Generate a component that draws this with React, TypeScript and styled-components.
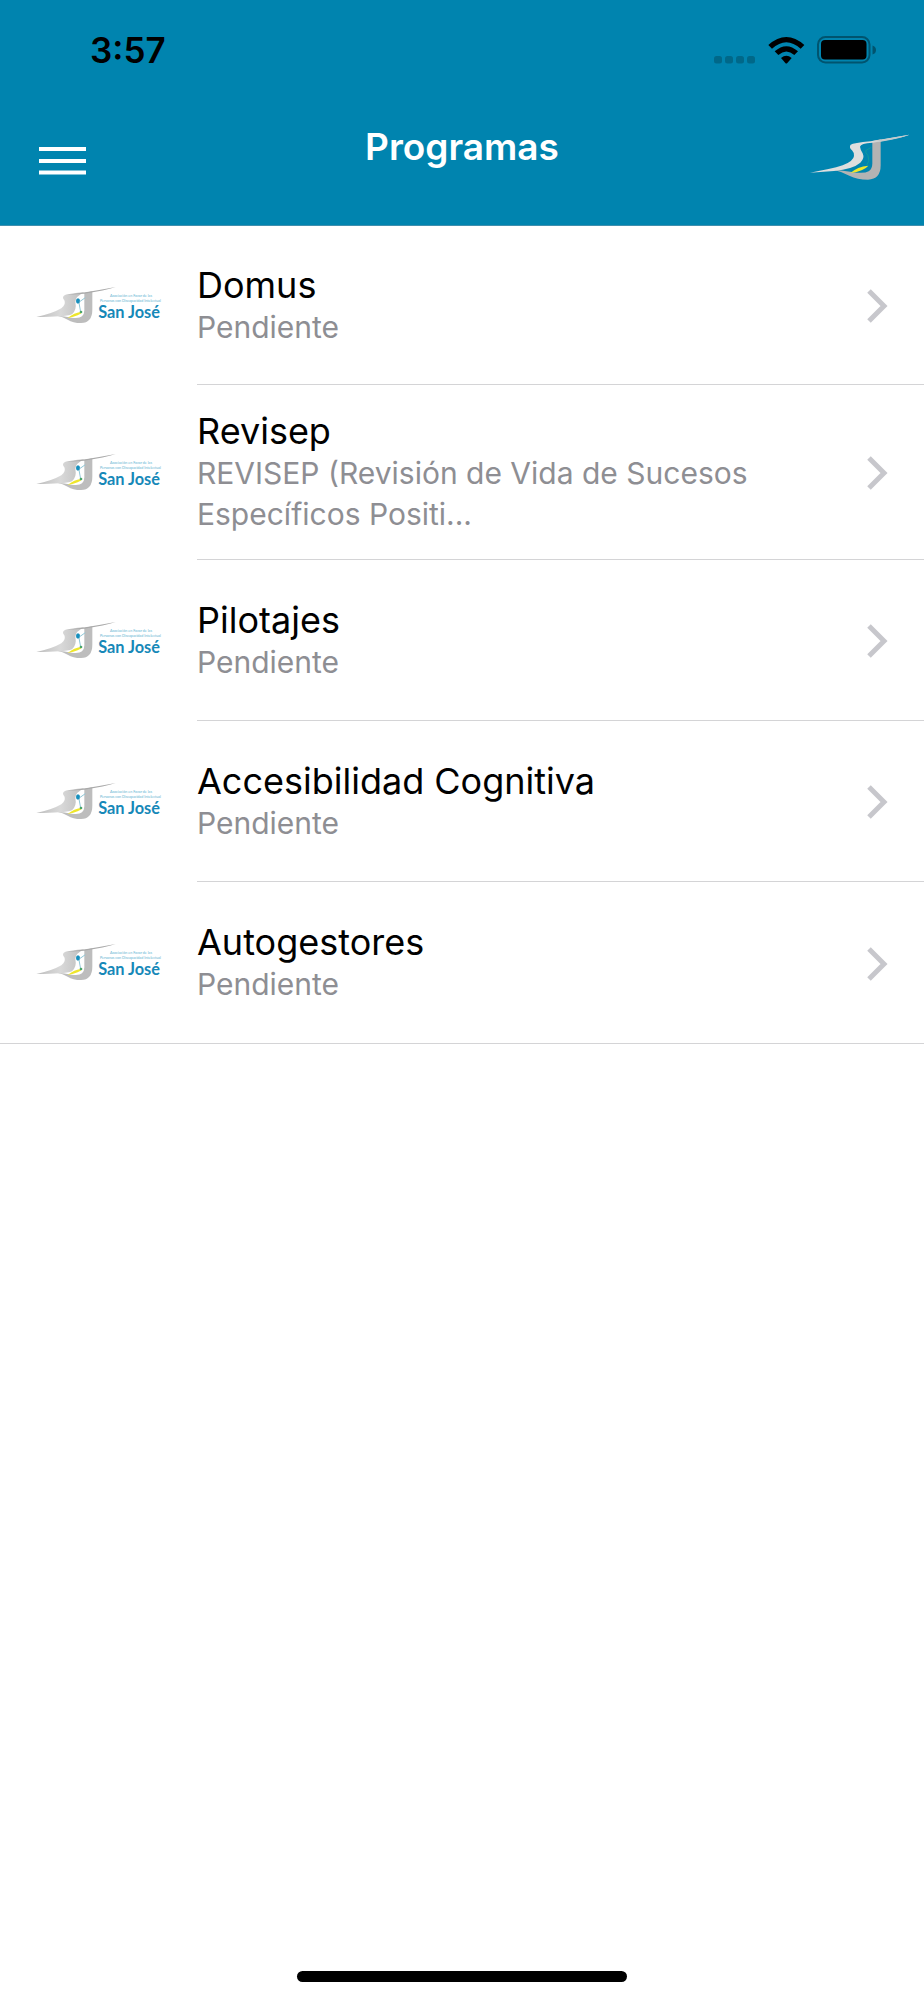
import React from "react";
import styled, { createGlobalStyle } from "styled-components";

const GlobalStyle = createGlobalStyle`
  * { box-sizing: border-box; }
  body {
    margin: 0;
    background: #fff;
    color: #000;
    font-family: Inter, "Liberation Sans", sans-serif;
  }
`;

const Screen = styled.div`
  display: flex;
  flex-direction: column;
  min-height: 100vh;
`;

const Header = styled.header`
  background: #0084af;
  border-bottom: 1px solid #3f8fae;
`;

const StatusBar = styled.div`
  display: flex;
  align-items: center;
  justify-content: space-between;
  height: 100px;
  padding: 0 48px 0 90px;
`;

const Clock = styled.time`
  font-size: 35px;
  font-weight: 600;
  line-height: 40px;
`;

const StatusIcons = styled.div`
  display: flex;
  align-items: center;
  gap: 12px;
`;

const NavBar = styled.div`
  display: grid;
  grid-template-columns: 1fr auto 1fr;
  align-items: start;
  height: 125px;
  padding-top: 10px;
`;

const MenuButton = styled.button`
  display: flex;
  align-items: center;
  justify-content: center;
  width: 124px;
  height: 102px;
  padding: 0;
  border: 0;
  background: none;
  cursor: pointer;
`;

const Title = styled.h1`
  margin: 15px 0 0;
  color: #fff;
  font-size: 37px;
  font-weight: 600;
  line-height: 44px;
`;

const BrandLink = styled.a`
  justify-self: end;
  height: 90px;
`;

const List = styled.ul`
  margin: 0;
  padding: 0;
  list-style: none;
`;

const Item = styled.li`
  &:last-child { border-bottom: 1px solid #d4d4d6; }
`;

const RowLink = styled.a`
  display: flex;
  align-items: center;
  gap: 22px;
  padding-left: 25px;
  color: inherit;
  text-decoration: none;
`;

const RowBody = styled.div`
  display: flex;
  flex: 1;
  align-items: center;
  gap: 90px;
  min-height: 161px;
  padding: 26px 36px 24px 0;
  border-bottom: 1px solid #d4d4d6;

  ${Item}:first-child & { min-height: 159px; }
  ${Item}:last-child & { border-bottom: 0; }
`;

const RowText = styled.div`
  flex: 1;
`;

const RowTitle = styled.h2`
  margin: 0 0 2px;
  font-size: 36px;
  font-weight: 400;
  line-height: 40px;
`;

const RowDetail = styled.p`
  margin: 0;
  color: #8e8e93;
  font-size: 30px;
  line-height: 41px;
`;

const Footer = styled.footer`
  display: flex;
  justify-content: center;
  margin-top: auto;
  padding-bottom: 18px;
`;

const HomeIndicator = styled.div`
  width: 330px;
  height: 11px;
  border-radius: 6px;
  background: #000;
`;

const Signal = () => (
  <svg width="42" height="27" viewBox="0 0 42 27" aria-hidden="true">
    {[0, 11, 22, 33].map((x) => (
      <rect key={x} x={x} y="19" width="8" height="7.5" rx="2.5" fill="#006889" />
    ))}
  </svg>
);

const Wifi = () => (
  <svg width="37" height="27" viewBox="0 0 111 81" aria-hidden="true">
    <path d="M1 24Q55-24 109 24L98 35Q55-4 12 35Z" />
    <path d="M20 43Q55 12 90 43L79 54Q55 33 31 54Z" />
    <path d="M39 63Q55 50 71 63L58 78Q55 81 52 78Z" />
  </svg>
);

const Battery = () => (
  <svg width="59" height="28" viewBox="0 0 59 28" aria-hidden="true">
    <rect x="1" y="1" width="51.5" height="25.5" rx="7.5" fill="none" stroke="#00546f" strokeWidth="2" />
    <rect x="4" y="4" width="45.5" height="19.5" rx="4" />
    <path d="M55.500 9.500Q59 10.500 59 14T55.500 18.500Z" fill="#00546f" />
  </svg>
);

const MenuIcon = () => (
  <svg width="48" height="30" viewBox="0 0 48 30" aria-hidden="true">
    <path d="M1 3H48M1 15H48M1 26.500H48" stroke="#fff" strokeWidth="4" />
  </svg>
);

const BrandMark = () => (
  <svg width="134" height="90" viewBox="0 0 402 270" aria-hidden="true">
    <path d="M130 179Q160 181 186 186Q222 192 236 184Q247 177 247 160V93L272 88V166Q272 208 234 209Q202 209 178 197Q157 185 130 179Z" fill="#b3b3b3" />
    <path d="M60 188Q122 178 158 166Q191 153 192 138Q193 128 186 121Q176 112 182 104Q190 99 242 94L358 74Q340 82 247 98Q212 99 210 110Q211 119 218 130Q225 145 211 158Q189 177 132 183Z" fill="#dedede" />
    <path d="M247 94L358 74Q334 84 272 95Z" fill="#c2cacc" />
    <path d="M181 189Q202 170 235 167Q222 183 181 189Z" fill="#efe72a" />
    <path d="M230 166Q241 153 234 137Q224 126 228 121L244 112" fill="none" stroke="#17a293" strokeWidth="2" />
  </svg>
);

const SanJoseLogo = () => (
  <svg width="150" height="70" viewBox="0 0 450 210" role="img" aria-label="San José">
    <defs>
      <linearGradient id="swoosh" x1="0" x2="1">
        <stop offset="0" stopColor="#bcbcbc" />
        <stop offset="0.5" stopColor="#d9d9d9" />
        <stop offset="1" stopColor="#bdbdbd" />
      </linearGradient>
    </defs>
    <path d="M96 134Q120 136 140 140Q163 143 171 136Q178 130 178 118V66L202 61V116Q202 155 168 156Q144 156 128 146Q113 137 96 134Z" fill="#bdbdbd" />
    <path d="M34 138Q82 128 109 112Q124 101 118 88Q109 78 120 72Q135 67 178 64Q151 76 151 93Q156 116 141 130Q119 138 34 138Z" fill="url(#swoosh)" />
    <path d="M120 72Q176 66 272 48Q240 59 178 68Z" fill="#a9a9a9" />
    <path d="M128 141Q146 125 172 122Q166 134 128 141Z" fill="#eee62b" />
    <ellipse cx="159" cy="90" rx="6" ry="8" fill="#168fbd" />
    <path d="M162 96L167 123M164 92L181 80" fill="none" stroke="#8ec7d7" strokeWidth="3" />
    <circle cx="168" cy="123" r="4" fill="#4aa56a" />
    <g fontFamily="Lato, sans-serif" textAnchor="end">
      <text x="381" y="77" fontSize="11" fill="#62b4d2">Asociación en Favor de las</text>
      <text x="408" y="93" fontSize="11" fill="#62b4d2">Personas con Discapacidad Intelectual</text>
      <text x="405" y="142" fontSize="49" fontWeight="700" fill="#1688b8">San José</text>
    </g>
  </svg>
);

const Chevron = () => (
  <svg width="22" height="34" viewBox="0 0 22 34" aria-hidden="true">
    <path d="M3 2L18 17L3 32" fill="none" stroke="#c7c7cc" strokeWidth="5" />
  </svg>
);

const programs = [
  { name: "Domus", detail: "Pendiente" },
  { name: "Revisep", detail: "REVISEP (Revisión de Vida de Sucesos Específicos Positi..." },
  { name: "Pilotajes", detail: "Pendiente" },
  { name: "Accesibilidad Cognitiva", detail: "Pendiente" },
  { name: "Autogestores", detail: "Pendiente" },
];

export default function App() {
  return (
    <Screen>
      <GlobalStyle />
      <Header>
        <StatusBar>
          <Clock>3:57</Clock>
          <StatusIcons>
            <Signal />
            <Wifi />
            <Battery />
          </StatusIcons>
        </StatusBar>
        <NavBar>
          <MenuButton type="button" aria-label="Menú">
            <MenuIcon />
          </MenuButton>
          <Title>Programas</Title>
          <BrandLink href="#inicio" aria-label="Inicio">
            <BrandMark />
          </BrandLink>
        </NavBar>
      </Header>
      <main>
        <List>
          {programs.map((program) => (
            <Item key={program.name}>
              <RowLink href={`#${program.name}`}>
                <SanJoseLogo />
                <RowBody>
                  <RowText>
                    <RowTitle>{program.name}</RowTitle>
                    <RowDetail>{program.detail}</RowDetail>
                  </RowText>
                  <Chevron />
                </RowBody>
              </RowLink>
            </Item>
          ))}
        </List>
      </main>
      <Footer>
        <HomeIndicator />
      </Footer>
    </Screen>
  );
}
